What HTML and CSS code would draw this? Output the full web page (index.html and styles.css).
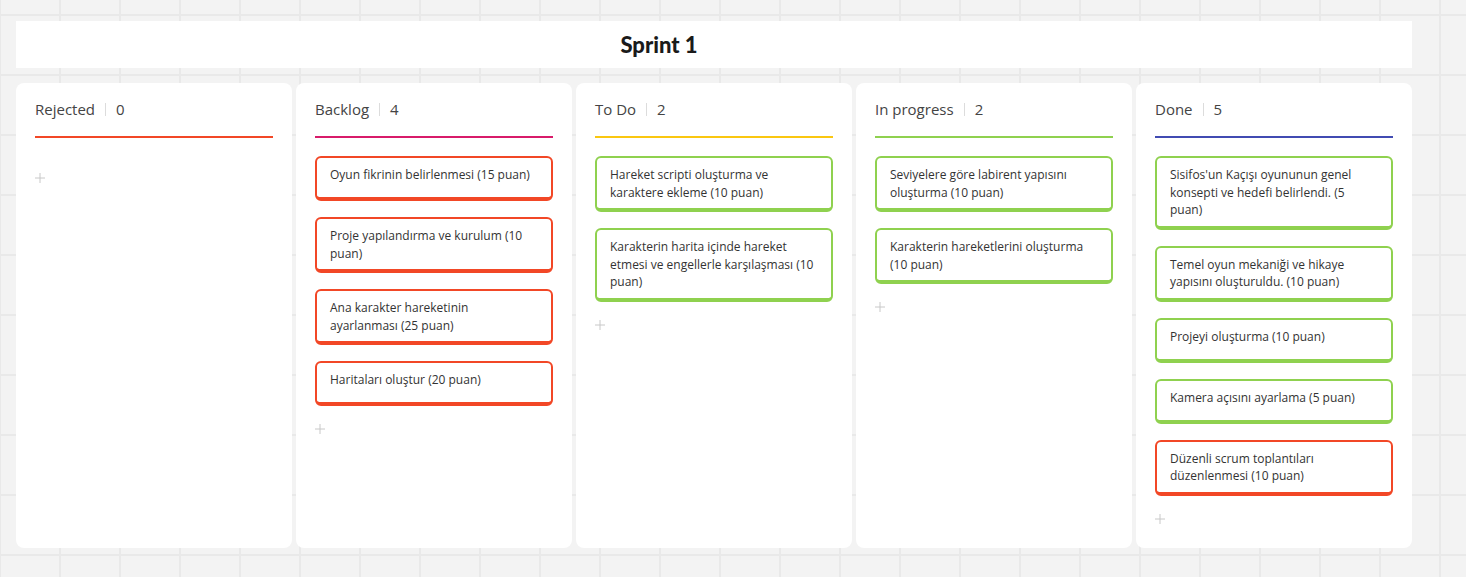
FILE: index.html
```html
<!DOCTYPE html>
<html lang="tr">
<head>
<meta charset="utf-8">
<title>Sprint 1</title>
<link rel="stylesheet" href="styles.css">
</head>
<body>
<div class="board">
  <div class="title">Sprint 1</div>
  <div class="columns">
    <section class="column">
      <div class="col-head"><span>Rejected</span><i class="sep"></i><span>0</span></div>
      <div class="col-rule rule-red"></div>
      <div class="cards empty">
        <div class="add"><svg width="10" height="10" viewBox="0 0 10 10"><path d="M5 0v10M0 5h10" stroke="#c8c8c8" stroke-width="1"/></svg></div>
      </div>
    </section>
    <section class="column">
      <div class="col-head"><span>Backlog</span><i class="sep"></i><span>4</span></div>
      <div class="col-rule rule-pink"></div>
      <div class="cards">
        <div class="card red">Oyun fikrinin belirlenmesi (15 puan)</div>
        <div class="card red">Proje yapılandırma ve kurulum (10 puan)</div>
        <div class="card red">Ana karakter hareketinin ayarlanması (25 puan)</div>
        <div class="card red">Haritaları oluştur (20 puan)</div>
        <div class="add"><svg width="10" height="10" viewBox="0 0 10 10"><path d="M5 0v10M0 5h10" stroke="#c8c8c8" stroke-width="1"/></svg></div>
      </div>
    </section>
    <section class="column">
      <div class="col-head"><span>To Do</span><i class="sep"></i><span>2</span></div>
      <div class="col-rule rule-yellow"></div>
      <div class="cards">
        <div class="card green">Hareket scripti oluşturma ve karaktere ekleme (10 puan)</div>
        <div class="card green">Karakterin harita içinde hareket etmesi ve engellerle karşılaşması (10 puan)</div>
        <div class="add"><svg width="10" height="10" viewBox="0 0 10 10"><path d="M5 0v10M0 5h10" stroke="#c8c8c8" stroke-width="1"/></svg></div>
      </div>
    </section>
    <section class="column">
      <div class="col-head"><span>In progress</span><i class="sep"></i><span>2</span></div>
      <div class="col-rule rule-green"></div>
      <div class="cards">
        <div class="card green">Seviyelere göre labirent yapısını oluşturma (10 puan)</div>
        <div class="card green">Karakterin hareketlerini oluşturma (10 puan)</div>
        <div class="add"><svg width="10" height="10" viewBox="0 0 10 10"><path d="M5 0v10M0 5h10" stroke="#c8c8c8" stroke-width="1"/></svg></div>
      </div>
    </section>
    <section class="column">
      <div class="col-head"><span>Done</span><i class="sep"></i><span>5</span></div>
      <div class="col-rule rule-blue"></div>
      <div class="cards">
        <div class="card green">Sisifos'un Kaçışı oyununun genel konsepti ve hedefi belirlendi. (5 puan)</div>
        <div class="card green">Temel oyun mekaniği ve hikaye yapısını oluşturuldu. (10 puan)</div>
        <div class="card green">Projeyi oluşturma (10 puan)</div>
        <div class="card green">Kamera açısını ayarlama (5 puan)</div>
        <div class="card red">Düzenli scrum toplantıları düzenlenmesi (10 puan)</div>
        <div class="add"><svg width="10" height="10" viewBox="0 0 10 10"><path d="M5 0v10M0 5h10" stroke="#c8c8c8" stroke-width="1"/></svg></div>
      </div>
    </section>
  </div>
</div>
</body>
</html>
```

FILE: styles.css
```css
* { box-sizing: border-box; }

html, body {
  margin: 0;
  height: 100%;
}

body {
  background-color: #f3f3f3;
  background-image:
    linear-gradient(to right, #e9e9e9 0, #e9e9e9 2px, transparent 2px),
    linear-gradient(to bottom, #e9e9e9 0, #e9e9e9 2px, transparent 2px);
  background-size: 60px 60px;
  background-position: -1px 14px;
  font-family: "Open Sans", "Noto Sans", sans-serif;
  color: #333;
  overflow: hidden;
}

.board {
  width: 1412px;
  padding: 21px 0 0 16px;
}

.title {
  height: 47px;
  background: #fff;
  display: flex;
  align-items: center;
  justify-content: center;
  padding-right: 110px;
  font-family: Lato, "Open Sans", sans-serif;
  font-weight: 900;
  font-size: 22px;
  color: #1a1a1a;
}

.columns {
  margin-top: 15px;
  display: grid;
  grid-template-columns: repeat(5, 276px);
  gap: 4px;
  align-items: stretch;
}

.column {
  background: #fff;
  border-radius: 8px;
  padding: 16px 19px 22px;
}

.col-head {
  display: flex;
  align-items: center;
  height: 20px;
  font-size: 15px;
  color: #444;
}

.sep {
  display: block;
  width: 1px;
  height: 13px;
  background: #dcdcdc;
  margin: 0 10px 0 10px;
}

.col-rule {
  height: 2px;
  margin-top: 17px;
}

.rule-red { background: #f24726; }
.rule-pink { background: #d81b6a; }
.rule-yellow { background: #fac710; }
.rule-green { background: #8fd14f; }
.rule-blue { background: #414bb2; }

.cards {
  margin-top: 18px;
  display: flex;
  flex-direction: column;
  gap: 16px;
}

.cards.empty {
  padding-top: 15px;
}

.card {
  min-height: 45px;
  border: 2px solid;
  border-bottom-width: 4px;
  border-radius: 6px;
  padding: 8px 17px 7px 13px;
  font-size: 12px;
  line-height: 17.5px;
  color: #333;
  background: #fff;
}

.card.red { border-color: #f24726; }
.card.green { border-color: #8fd14f; }

.add {
  height: 14px;
  display: flex;
  align-items: center;
}

.add svg { display: block; }
```
